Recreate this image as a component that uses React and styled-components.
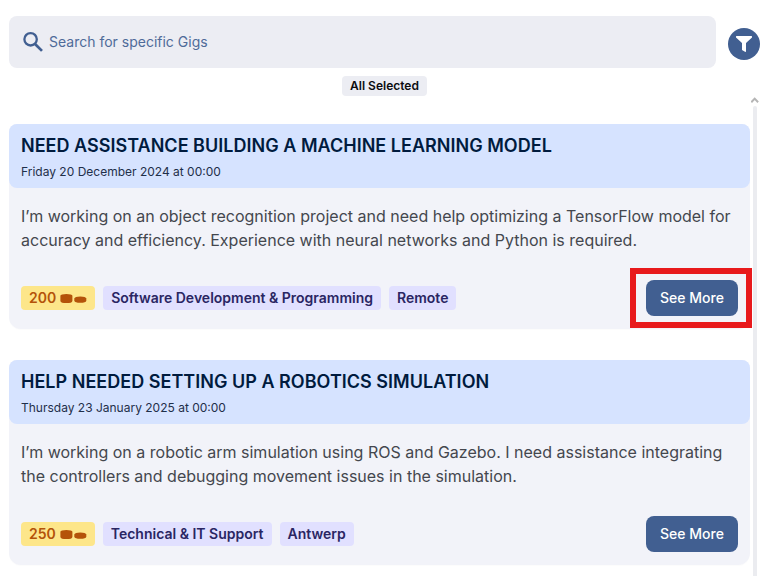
import React from "react";
import styled, { createGlobalStyle } from "styled-components";

const GlobalStyle = createGlobalStyle`
  *, *::before, *::after { box-sizing: border-box; }
  body { margin: 0; background: #fff; overflow: hidden; font-family: Inter, sans-serif; }
  h2, p { margin: 0; }
  button, input { font-family: inherit; }
`;

const Page = styled.main`
  height: 576px;
  padding: 16px 20px 0 9px;
  display: flex;
  flex-direction: column;
  overflow: hidden;
`;

const Toolbar = styled.header`
  display: flex;
  align-items: center;
  gap: 12px;
  height: 52px;
  flex: none;
`;

const SearchBox = styled.label`
  display: flex;
  align-items: center;
  width: 707px;
  height: 52px;
  padding: 0 12px;
  gap: 4px;
  border-radius: 8px;
  background: #ecedf3;
`;

const SearchInput = styled.input`
  flex: 1;
  height: 20px;
  padding: 0;
  border: 0;
  outline: 0;
  background: transparent;
  font-size: 14px;
  line-height: 20px;
  &::placeholder { color: #4f6b99; opacity: 1; }
`;

const FilterButton = styled.button`
  display: grid;
  place-items: center;
  width: 32px;
  height: 32px;
  padding: 0;
  margin-top: 4px;
  border: 0;
  border-radius: 50%;
  background: #415f91;
`;

const Selection = styled.div`
  width: 85px;
  height: 20px;
  margin: 8px 0 0 333px;
  border-radius: 4px;
  background: #ecedf3;
  color: #0b0c10;
  font-size: 12px;
  font-weight: 600;
  line-height: 20px;
  text-align: center;
  flex: none;
`;

const Results = styled.div`
  display: flex;
  flex: 1;
  gap: 1px;
  min-height: 0;
`;

const CardList = styled.section`
  width: 741px;
  padding-top: 28px;
  display: flex;
  flex-direction: column;
  gap: 31px;
`;

const Card = styled.article`
  height: 205px;
  flex: none;
  border-radius: 8px 8px 12px 12px;
  background: #f2f3f9;
  box-shadow: 0 1px 1px rgba(0, 0, 0, 0.015);
`;

const CardHeader = styled.header`
  height: 64px;
  padding: 8px 12px;
  border-radius: 8px;
  background: #d6e3ff;
`;

const Title = styled.h2`
  color: #001b3e;
  font-size: 18px;
  font-weight: 600;
  line-height: 28px;
  letter-spacing: 0.02px;
  white-space: nowrap;
`;

const DateLine = styled.p`
  margin-top: 4px;
  color: #1f2f4a;
  font-size: 12px;
  line-height: 16px;
`;

const Description = styled.p`
  padding: 16px 12px 0;
  color: #44474e;
  font-size: 16px;
  line-height: 24px;
  white-space: pre;
`;

const CardFooter = styled.footer`
  display: flex;
  align-items: center;
  padding: 28px 12px 0;
  gap: 8px;
`;

const Tag = styled.span`
  height: 24px;
  padding: 0 8px;
  border-radius: 4px;
  background: #e1e0ff;
  color: #2a2663;
  font-size: 14px;
  font-weight: 600;
  line-height: 24px;
  white-space: nowrap;
`;

const PriceTag = styled(Tag)`
  display: flex;
  align-items: center;
  gap: 4px;
  background: #fde68a;
  color: #b45309;
`;

const MoreButton = styled.button`
  display: block;
  width: 92px;
  height: 36px;
  padding: 0 0 1px;
  border: 0;
  border-radius: 8px;
  background: #415f91;
  color: #fff;
  font-size: 14px;
  font-weight: 500;
`;

const ButtonFrame = styled.div`
  position: relative;
  margin-left: auto;
`;

const Highlight = styled.span`
  position: absolute;
  inset: -12px -14px -12px -16px;
  border: 6px solid #e8191c;
  pointer-events: none;
  z-index: 1;
`;

const Scrollbar = styled.div`
  width: 8px;
  display: flex;
  flex-direction: column;
  align-items: center;
`;

const ScrollThumb = styled.div`
  width: 4px;
  flex: 1;
  border-radius: 2px 2px 0 0;
  background: #ebecf0;
`;

const ScrollArrow = styled.svg`
  flex: none;
  display: block;
  margin-bottom: 2px;
`;

const SearchIcon = () => (
  <svg width="24" height="24" viewBox="0 0 24 24" fill="none" stroke="#415f91">
    <circle cx="9.6" cy="9.3" r="6.2" strokeWidth="2.3" />
    <path d="M13.8 13.7 21 20.9" strokeWidth="2.7" />
  </svg>
);

const FilterIcon = () => (
  <svg width="16" height="16" viewBox="0 0 16 16" fill="#fff">
    <path d="M.5 0h15q.5 0 .5.5v1L10 7v8.3q0 .7-.6.7L6 14V7L0 1.5v-1Q0 0 .5 0Z" />
  </svg>
);

const Coins = () => (
  <svg width="27" height="12" viewBox="0 0 27 12" fill="#b45309">
    <path d="M.4 3.8Q.8 2.1 6.4 2.1t6 1.7v5.1q-.4 2.2-6 2.2t-6-2.2Z" />
    <path d="M14.3 6.4q.5-2 6-2t6 2v2.3q-.5 2.1-6 2.1t-6-2.1Z" />
  </svg>
);

const gigs = [
  {
    title: "NEED ASSISTANCE BUILDING A MACHINE LEARNING MODEL",
    date: "Friday 20 December 2024 at 00:00",
    text: "I’m working on an object recognition project and need help optimizing a TensorFlow model for\naccuracy and efficiency. Experience with neural networks and Python is required.",
    price: 200,
    tags: ["Software Development & Programming", "Remote"],
    marked: true,
  },
  {
    title: "HELP NEEDED SETTING UP A ROBOTICS SIMULATION",
    date: "Thursday 23 January 2025 at 00:00",
    text: "I’m working on a robotic arm simulation using ROS and Gazebo. I need assistance integrating\nthe controllers and debugging movement issues in the simulation.",
    price: 250,
    tags: ["Technical & IT Support", "Antwerp"],
  },
];

const GigCard = ({ gig }) => (
  <Card>
    <CardHeader>
      <Title>{gig.title}</Title>
      <DateLine>{gig.date}</DateLine>
    </CardHeader>
    <Description>{gig.text}</Description>
    <CardFooter>
      <PriceTag>{gig.price}<Coins /></PriceTag>
      {gig.tags.map((tag) => <Tag key={tag}>{tag}</Tag>)}
      <ButtonFrame>
        <MoreButton>See More</MoreButton>
        {gig.marked && <Highlight />}
      </ButtonFrame>
    </CardFooter>
  </Card>
);

export default function App() {
  return (
    <Page>
      <GlobalStyle />
      <Toolbar>
        <SearchBox>
          <SearchIcon />
          <SearchInput placeholder="Search for specific Gigs" />
        </SearchBox>
        <FilterButton aria-label="Filter"><FilterIcon /></FilterButton>
      </Toolbar>
      <Selection>All Selected</Selection>
      <Results>
        <CardList>
          {gigs.map((gig) => <GigCard key={gig.title} gig={gig} />)}
        </CardList>
        <Scrollbar>
          <ScrollArrow width="8" height="8" viewBox="0 0 8 8" fill="none" stroke="#b5b5b5" strokeWidth="2">
            <path d="M.3 6.2 3.7 2.6 7.1 6.2" />
          </ScrollArrow>
          <ScrollThumb />
        </Scrollbar>
      </Results>
    </Page>
  );
}
